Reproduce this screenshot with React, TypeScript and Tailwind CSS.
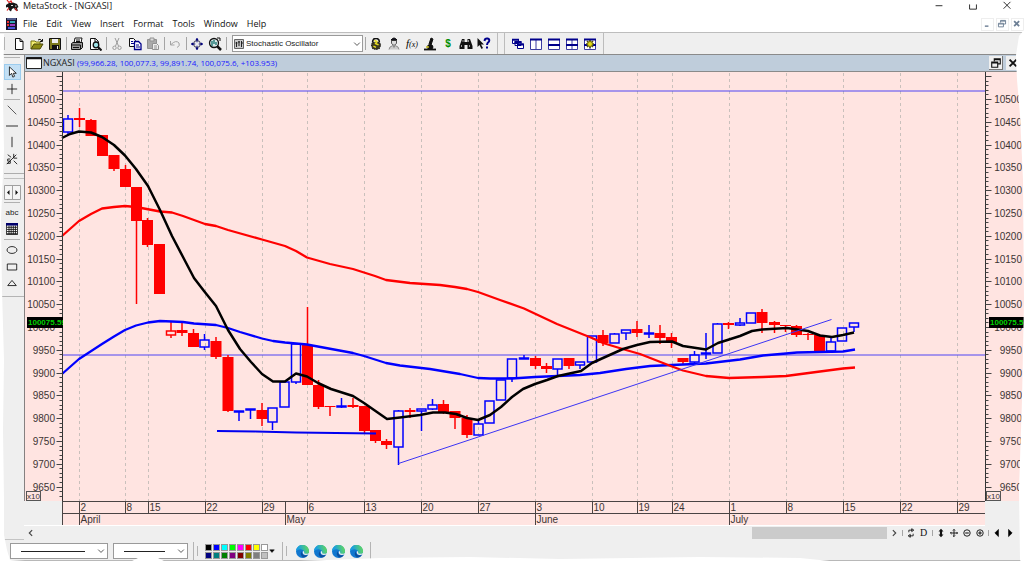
import React from "react";

type Kind = "up" | "down" | "open";
// x, body top, body bottom, wick top, wick bottom, kind
type Candle = [number, number, number, number, number, Kind];

const candles: Candle[] = [
  [68, 119, 132, 115, 135, "up"],
  [79.5, 118, 120, 108, 127, "down"],
  [91, 120, 136, 119, 136, "down"],
  [102.5, 135, 156, 135, 156, "down"],
  [114, 155, 169, 155, 171, "down"],
  [125.5, 169, 187, 165, 187, "down"],
  [136.5, 187, 221, 187, 304, "down"],
  [147.5, 220, 245, 218, 247, "down"],
  [159.5, 244, 294, 244, 294, "down"],
  [171, 331, 335, 322, 338, "open"],
  [182, 330, 333, 322, 336, "down"],
  [193.5, 333, 347, 329, 347, "down"],
  [204.5, 340, 347, 334, 350, "up"],
  [216, 341, 357, 337, 359, "down"],
  [228, 357, 411, 355, 412, "down"],
  [239, 411, 412, 411, 421, "up"],
  [250.5, 409, 410, 409, 419, "up"],
  [262, 410, 419, 403, 426, "down"],
  [272.5, 408, 422, 408, 430, "up"],
  [284.5, 382, 407, 382, 407, "up"],
  [296, 344, 382, 343, 384, "up"],
  [307.5, 345, 385, 307, 385, "down"],
  [318.5, 385, 407, 380, 409, "down"],
  [330, 406, 407, 406, 416, "down"],
  [341.5, 406, 407, 398, 408, "up"],
  [353, 405, 407, 398, 408, "down"],
  [364.5, 406, 431, 406, 433, "down"],
  [375.5, 430, 441, 430, 443, "down"],
  [386.5, 441, 445, 439, 449, "down"],
  [398.5, 411, 447, 410, 465, "up"],
  [410, 410, 412, 408, 418, "down"],
  [421.5, 409, 411, 409, 431, "up"],
  [432.5, 405, 409, 399, 410, "up"],
  [443.5, 404, 412, 400, 414, "down"],
  [455, 411, 418, 411, 429, "down"],
  [467, 418, 435, 415, 438, "down"],
  [478.5, 424, 435, 419, 435, "up"],
  [489.5, 401, 423, 401, 423, "up"],
  [501, 380, 400, 380, 400, "up"],
  [512, 359, 378, 359, 382, "up"],
  [524, 358, 359, 355, 359, "up"],
  [535.5, 358, 366, 356, 369, "down"],
  [546.5, 366, 369, 363, 373, "down"],
  [557.5, 359, 369, 359, 375, "up"],
  [569, 358, 366, 358, 369, "down"],
  [580, 362, 365, 362, 369, "up"],
  [592, 336, 362, 336, 362, "up"],
  [603, 335, 343, 330, 346, "down"],
  [614.5, 334, 343, 333, 343, "up"],
  [626, 330, 333, 330, 340, "up"],
  [637, 329, 333, 321, 337, "down"],
  [649, 333, 334, 325, 338, "up"],
  [660, 333, 338, 325, 344, "down"],
  [671.5, 337, 342, 333, 348, "down"],
  [683, 358, 362, 358, 364, "down"],
  [694.5, 355, 362, 351, 363, "up"],
  [706, 353, 354, 333, 359, "up"],
  [717.5, 324, 353, 323, 353, "up"],
  [728.5, 323, 325, 322, 329, "down"],
  [740, 323, 325, 318, 326, "up"],
  [751, 313, 323, 313, 323, "up"],
  [762, 312, 323, 309, 333, "down"],
  [774.5, 322, 325, 321, 333, "down"],
  [785.5, 325, 326, 325, 332, "down"],
  [796.5, 326, 335, 325, 337, "down"],
  [808, 334, 335, 333, 340, "down"],
  [819.5, 335, 351, 334, 352, "down"],
  [831, 342, 351, 337, 353, "up"],
  [842, 328, 341, 328, 341, "up"],
  [854, 323, 327, 323, 332, "up"],
];

const fastLine =
  "62,138 70,134 79,131.5 91,132.5 102,137 114,145 125,155.5 136,169 148,186 160,210 172,236 183,257 194,278 204,291 216,306 228,330 240,349 251,362 262,374 273,381.5 285,381.5 296,373.5 307,376.5 318,383 331,389 353,396 364,403 387,419 400,417.5 420,415 433,412.5 445,412.5 456,414 467,418 478,420 490,415 501,407 512,397 523,389 535,384 547,380 558,376 581,371 592,363 603,358 623,349 637,345 650,342 672,341.5 683,346 706,349.5 718,343 740,336 752,331 762,329.5 787,328 808,331 820,335.5 832,337 843,335 854,332.5";

const slowLine =
  "62,236 79,221 91,214 102,208.5 114,207 125,206 136,207 160,211.5 172,212.5 183,216 205,224 216,226 228,230 262,239.5 285,246 296,251 307,257.5 330,264 353,269 375,276 386,280 410,283 440,285 455,287 467,289 478,292 500,300 524,308.5 557,324 592,338 603,343 626,350 640,354 672,366.5 683,370.5 706,376 729,378 763,377 786,376 820,371.5 843,368.5 855,367.5";

const midLine =
  "62,374 79,359 102,344 114,336.5 125,330 136,325.5 148,322.5 160,321 172,321.5 183,322 194,323.5 216,325 228,328 240,332 262,338.5 273,341 285,342.5 307,344.5 353,353 364,356 386,363 400,365.5 430,369 460,374 478,378 490,378.5 512,378.5 535,377 580,375 600,373 626,369 650,366 672,365 706,363.5 740,359.5 763,355.5 786,353.5 797,352.5 843,351.5 855,349.5";

const weeks: [number, string][] = [
  [79.5, "2"],
  [125.5, "8"],
  [148.5, "15"],
  [205.5, "22"],
  [262.5, "29"],
  [307.5, "6"],
  [364.5, "13"],
  [421.5, "20"],
  [478.5, "27"],
  [535.5, "3"],
  [592.5, "10"],
  [637.5, "19"],
  [672.5, "24"],
  [729.5, "1"],
  [786.5, "8"],
  [843.5, "15"],
  [900.5, "22"],
  [957.5, "29"],
];

const months: [number, string][] = [
  [79.5, "April"],
  [285.5, "May"],
  [535.5, "June"],
  [729.5, "July"],
];

const levels = Array.from({ length: 18 }, (_, i) => 10500 - i * 50);
const minorTicks = Array.from({ length: 93 }, (_, i) => 76.2 + i * 4.56);

const PriceScale = ({ axisX, dir, labelX }: { axisX: number; dir: 1 | -1; labelX: number }) => (
  <g>
    <path d={`M${axisX} 72V501`} stroke="#333" />
    {minorTicks.map((y, i) => (
      <path key={y} d={`M${axisX} ${Math.round(y) + 0.5}h${dir * (i % 5 === 0 ? 6 : 3)}`} stroke="#444" />
    ))}
    {levels.map((v, i) => (
      <text key={v} x={labelX} y={Math.round(103 + i * 22.8)} textAnchor="end" fontSize="10" fill="#3c3434">
        {v}
      </text>
    ))}
  </g>
);

const PriceChart = () => (
  <svg viewBox="24 72 1000 454" className="block w-full" fontFamily="'Liberation Sans', Arial, sans-serif" role="img" aria-label="NGXASI daily chart">
    <rect x="24" y="72" width="1000" height="454" fill="#efefef" />
    <rect x="24" y="72" width="1000" height="429" fill="#ffe4e1" />
    <rect x="62" y="501" width="923" height="24" fill="#ffe4e1" />
    <path d="M24 525.5H985" stroke="#fff" />
    <path d="M24.5 72V501" stroke="#858080" />

    {weeks.map(([x]) => (
      <path key={x} d={`M${x} 73V501`} stroke="#c9c0bc" strokeDasharray="3 3" />
    ))}
    <path d="M62 91H985M62 355H985" stroke="#4e44f4" strokeWidth="1" />

    {candles.map(([x, top, bottom, high, low, kind]) => {
      const color = kind === "up" ? "#0000ff" : "#ff0000";
      return (
        <g key={x} stroke={color} strokeWidth="1.5">
          <path d={`M${x} ${high}V${top}M${x} ${bottom}V${low}`} />
          {kind === "down" ? (
            <rect x={x - 5.5} y={top} width="11" height={bottom - top} fill={color} stroke="none" />
          ) : (
            <rect x={x - 4.5} y={top} width="9" height={bottom - top} fill="none" />
          )}
        </g>
      );
    })}

    <g fill="none" strokeLinejoin="round">
      <polyline points={midLine} stroke="#0000ff" strokeWidth="2.3" />
      <polyline points={slowLine} stroke="#ff0000" strokeWidth="2.3" />
      <polyline points={fastLine} stroke="#000" strokeWidth="2.5" />
      <path d="M217 431L256 431.5L296 432.5L376 433.5" stroke="#0000f0" strokeWidth="1.8" />
      <path d="M398.5 463.5L831.5 319.5" stroke="#3c34f4" strokeWidth="1" />
    </g>

    <PriceScale axisX={62.5} dir={-1} labelX={55} />
    <PriceScale axisX={985.5} dir={1} labelX={1022} />

    {/* Last price tags */}
    <rect x="27" y="317" width="36" height="11" fill="#000" />
    <rect x="989" y="317" width="35" height="11" fill="#000" />
    <svg x="27" y="317" width="36" height="11">
      <text x="1" y="8" fontSize="8" fontWeight="bold" fill="#00d000">100075.59</text>
    </svg>
    <svg x="989" y="317" width="35" height="11">
      <text x="1" y="8" fontSize="8" fontWeight="bold" fill="#00d000">100075.5</text>
    </svg>

    {/* Scale factor */}
    <g fontSize="8" fill="#3c3434">
      <rect x="26.5" y="491.5" width="14" height="9" fill="#ffe4e1" stroke="#555" />
      <text x="27" y="499">x10</text>
      <rect x="986.5" y="491.5" width="14" height="9" fill="#ffe4e1" stroke="#555" />
      <text x="987" y="499">x10</text>
    </g>

    {/* Dates */}
    <path d="M62 501.5H985M62 513.5H985M62.5 501V525" stroke="#4a4444" />
    <g fontSize="10" fill="#3c3434">
      {weeks.map(([x, label]) => (
        <g key={x}>
          <path d={`M${x} 501V513`} stroke="#4a4444" />
          <text x={x + 1} y="511">{label}</text>
        </g>
      ))}
      {months.map(([x, label]) => (
        <g key={x}>
          <path d={`M${x} 501V525`} stroke="#4a4444" />
          <text x={x + 1} y="523">{label}</text>
        </g>
      ))}
    </g>
  </svg>
);

const Glyph = ({ children, className = "h-3.5 w-3.5" }: { children: React.ReactNode; className?: string }) => (
  <svg viewBox="0 0 14 14" className={`shrink-0 ${className}`} fill="none" stroke="#111" aria-hidden="true">
    {children}
  </svg>
);

const Tool = ({ label, children }: { label: string; children: React.ReactNode }) => (
  <button type="button" aria-label={label} className="flex h-5 w-[18px] shrink-0 items-center justify-center">
    {children}
  </button>
);

const Sep = () => (
  <span className="flex w-1 shrink-0 justify-center self-stretch py-1">
    <span className="w-px bg-[#a5a5a5]" />
  </span>
);

const Handle = () => (
  <span className="flex w-2 shrink-0 gap-[3px] self-stretch">
    <span className="w-px bg-[#b4b4b4]" />
    <span className="my-1 w-px bg-[#b4b4b4]" />
  </span>
);

const TitleBar = () => (
  <header className="flex h-3.5 items-start pl-1.5">
    <svg viewBox="0 0 13 12" className="h-3 w-[13px]" aria-hidden="true">
      <path d="M0 5L3 3L7 2.500L11 4L12.500 7L11 8L12 11L9 10L8 8L6 9L5 11.500L3 10L2 7L0 7.500Z" fill="#151515" />
      <path d="M1 0L3 2.500L5 1L6 3M3 8L1 10.500M9 8L11 11" fill="none" stroke="#d22" strokeWidth="1.200" />
      <path d="M5 5.500h2M9 6h1.500" stroke="#ddd" />
    </svg>
    <h1 className="flex-1 pl-1 text-[9px] leading-3 text-[#222]">MetaStock - [NGXASI]</h1>
    <div className="flex gap-5 pr-2.5 pt-px">
      <button type="button" aria-label="Minimize" className="h-3 w-3.5">
        <Glyph className="h-3 w-3.5"><path d="M3 5.500h8" /></Glyph>
      </button>
      <button type="button" aria-label="Maximize" className="h-3 w-3.5">
        <Glyph className="h-3 w-3.5"><path d="M3 4V9.500H11V4" /></Glyph>
      </button>
      <button type="button" aria-label="Close" className="h-3 w-3.5">
        <Glyph className="h-3 w-3.5"><path d="M3 1L11 9M11 1L3 9" /></Glyph>
      </button>
    </div>
  </header>
);

const menus = ["File", "Edit", "View", "Insert", "Format", "Tools", "Window", "Help"];

const MenuBar = () => (
  <nav className="flex h-[19px] items-center border-b border-[#bdbdbd] pl-1.5 pt-0.5">
    <svg viewBox="0 0 12 12" className="h-3 w-3" aria-hidden="true">
      <path d="M0 0h11v12H0z" fill="#17142e" />
      <path d="M1 3h2v2H1zM1 6h2v2H1z" fill="#e33" />
      <path d="M4 3h5v2H4z" fill="#35a7b8" />
      <path d="M4 6h5v2H4z" fill="#a13cc0" />
      <path d="M2 9h7v2H2z" fill="#4554d8" />
      <path d="M1 1h9" stroke="#8fa4e8" />
    </svg>
    <ul className="flex flex-1 gap-[9px] pl-[5px] text-[9px] leading-3 text-[#111]">
      {menus.map((m) => (
        <li key={m}>
          <button type="button">{m}</button>
        </li>
      ))}
    </ul>
    <div className="flex gap-0.5 text-[#6d7f95]">
      <button type="button" aria-label="Minimize chart" className="h-[13px] w-[13px] border border-[#eee]">
        <Glyph className="h-2.5 w-2.5"><path d="M4 10h5" stroke="#6d7f95" strokeWidth="2" /></Glyph>
      </button>
      <button type="button" aria-label="Restore chart" className="h-[13px] w-[13px] border border-[#eee]">
        <Glyph className="h-2.5 w-2.5"><path d="M5 5V2h7v5H9M2 6h7v5H2zM2 7h7M5 3h7" stroke="#6d7f95" strokeWidth="1.300" /></Glyph>
      </button>
      <button type="button" aria-label="Close chart" className="h-[13px] w-[13px] border border-[#eee]">
        <Glyph className="h-2.5 w-2.5"><path d="M3 3L10 10M10 3L3 10" stroke="#6d7f95" strokeWidth="2.500" /></Glyph>
      </button>
    </div>
  </nav>
);

const MainToolbar = () => (
  <div className="flex h-[22px] items-center border-b border-[#8a8a8a] bg-[#efefef] pl-1">
    <span className="my-1 mr-[5px] w-px self-stretch bg-[#b4b4b4]" />
    <Tool label="New">
      <Glyph><path d="M3.500 1.500h4.500l3 3v8h-7.500zM8 1.500v3h3" fill="#fff" /></Glyph>
    </Tool>
    <Tool label="Open">
      <Glyph>
        <path d="M1 12V4h4l1 1h4v2" fill="#f4ee73" stroke="#77740e" />
        <path d="M1 12l3-5h9l-3 5z" fill="#8c8a12" stroke="#4a480c" />
        <path d="M8 3q2-2 4 1M12.500 2v2.500H10" />
      </Glyph>
    </Tool>
    <Tool label="Save">
      <Glyph>
        <path d="M1.500 1.500h11v11h-11z" fill="#7c7a1c" />
        <path d="M4 2h6v4H4z" fill="#efefef" stroke="none" />
        <path d="M4 8h7v4H4z" fill="#111" stroke="none" />
        <path d="M9 9h1v3H9z" fill="#eee" stroke="none" />
      </Glyph>
    </Tool>
    <Sep />
    <Tool label="Print">
      <Glyph>
        <path d="M4 6l1-5h7l-1 5" fill="#fff" />
        <path d="M1.500 6.500l1.500-1h9.500v5l-2 2h-9z" fill="#999" />
        <path d="M1 8h9.500v4M3 10.500h6M6 3h4M6 4.500h4" />
      </Glyph>
    </Tool>
    <Tool label="Print preview">
      <Glyph>
        <path d="M2.500 1.500h5l3 3v8h-8zM7 1.500V5h3" fill="#fff" />
        <circle cx="8" cy="8" r="2.800" fill="#9fe3e8" strokeWidth="1.300" />
        <path d="M10 10l3.500 3.500" strokeWidth="2" />
      </Glyph>
    </Tool>
    <Sep />
    <Tool label="Cut">
      <Glyph><path d="M5 1l3.500 8M9 1L5.500 9" stroke="#9b9b9b" /><circle cx="4.500" cy="10.800" r="1.700" stroke="#9b9b9b" /><circle cx="9.500" cy="10.800" r="1.700" stroke="#9b9b9b" /></Glyph>
    </Tool>
    <Tool label="Copy">
      <Glyph>
        <path d="M1.500 1.500h4l2 2v6h-6z" fill="#fff" />
        <path d="M6.500 4.500h4l2.500 2.500v5.500H6.500z" fill="#fff" stroke="#00008b" strokeWidth="1.300" />
        <path d="M3 4.500h2M3 6.500h3M8 8h3M8 10h4" stroke="#00008b" />
      </Glyph>
    </Tool>
    <Tool label="Paste">
      <Glyph>
        <path d="M1.500 2.500h9v9h-9z" fill="#aaa" stroke="#929292" />
        <path d="M4 1h4v3H4z" fill="#ddd" stroke="#929292" />
        <path d="M6.500 6.500h4l2 2v4h-6zM8 9h3M8 11h3" fill="#eee" stroke="#929292" />
      </Glyph>
    </Tool>
    <Sep />
    <Tool label="Undo">
      <Glyph><path d="M2.500 4v4h4M3 7.500Q8 2.500 11 6Q12.500 9 9 10.500" stroke="#a3a3a3" /></Glyph>
    </Tool>
    <Sep />
    <Tool label="Crosshair">
      <Glyph className="h-3 w-3">
        <circle cx="7" cy="7" r="4" stroke="#26263c" />
        <path d="M7 0v5M7 9v5M0 7h5M9 7h5" stroke="#00007c" />
        <path d="M7 0L9 2.500H5zM7 14L5 11.500h4zM0 7l2.500-2v4zM14 7l-2.500 2V5z" fill="#00007c" stroke="none" />
      </Glyph>
    </Tool>
    <Tool label="Zoom">
      <Glyph>
        <circle cx="6" cy="6" r="4.500" fill="#d7e7e7" strokeWidth="1.300" />
        <path d="M9 9l4 4" strokeWidth="2.500" />
        <path d="M4 4v5M6 3v4M8 5v3" stroke="#13716c" strokeWidth="1.300" />
        <path d="M9 1h3v3" />
      </Glyph>
    </Tool>
    <Sep />
    <label className="ml-1 flex h-[17px] w-[131px] shrink-0 items-center border border-[#9a9a9a] bg-white px-px">
      <svg viewBox="0 0 10 10" className="h-2.5 w-2.5 shrink-0" aria-hidden="true">
        <path d="M.5.500h9v9h-9z" fill="#c8c8c8" stroke="#666" />
        <path d="M2.500 3v5M5 2v5M7.500 2v6M1.500 4h2M4 3h2M7 4h2" stroke="#222" />
      </svg>
      <span className="sr-only">Indicator</span>
      <select className="h-full min-w-0 flex-1 appearance-none pl-0.5 font-['Liberation_Sans',Arial,sans-serif] text-[8px] text-[#222]">
        <option>Stochastic Oscillator</option>
      </select>
      <Glyph className="h-2 w-2"><path d="M2 4.500l5 5 5-5" stroke="#555" strokeWidth="1.700" /></Glyph>
    </label>
    <Sep />
    <Tool label="System security">
      <Glyph className="h-3 w-3">
        <path d="M3 5q0-4.500 4-4.500T11 5" strokeWidth="1.800" />
        <path d="M3 5h8l1.500 3-1.500 4.500-4 1-4-1L1.500 8z" fill="#3c3a20" strokeDasharray="2 1" />
        <path d="M5 3l3 1-1.500 2.500L10 8M4 9.500l3 1.500" stroke="#e6dc20" strokeWidth="1.800" />
      </Glyph>
    </Tool>
    <Tool label="Expert advisor">
      <Glyph>
        <path d="M4.500 3.500h5v3L7 8.500 4.500 6.500z" fill="#ddd" stroke="#555" />
        <path d="M4 3q3-4 6 0z" fill="#15152d" />
        <path d="M2 12.500l1-2.500 3-1.500 1 2 1-2 3 1.500 1 2.500" stroke="#8c8c8c" fill="#ccc" />
      </Glyph>
    </Tool>
    <Tool label="Indicator builder">
      <span className="font-['Liberation_Serif',serif] text-[11px] italic leading-3">f<span className="text-[8px]">(x)</span></span>
    </Tool>
    <Tool label="Explorer">
      <Glyph>
        <path d="M8 1L6 7l2 1 2-6z" fill="#111" />
        <path d="M5 8h4q2 2 0 4H5z" fill="#111" />
        <path d="M1 12.500h12" strokeWidth="1.800" />
        <path d="M3 10h3" stroke="#c9bc1a" strokeWidth="1.500" />
      </Glyph>
    </Tool>
    <Tool label="System tester">
      <span className="font-['Liberation_Sans',Arial,sans-serif] text-[10px] font-bold leading-3 text-[#008d00]">$</span>
    </Tool>
    <Tool label="Find">
      <Glyph>
        <path d="M3 2h2.500v3h3V2H11l2.500 7v3h-5V8h-3v4H.5V9z" fill="#111" stroke="none" />
        <path d="M2.500 8v2M10.500 8v2M4 3v2M9.500 3v2" stroke="#bbb" strokeWidth=".8" />
      </Glyph>
    </Tool>
    <Tool label="Context help">
      <Glyph>
        <path d="M.5 1v9l2-2 2 4 1.500-1-2-3.500H7z" fill="#111" stroke="none" />
        <path d="M7.500 4Q8 1 10.500 1.500Q13 2 12 4.500Q10 6 10 8M10 9.500v2" stroke="#00008b" strokeWidth="2" />
      </Glyph>
    </Tool>
    <span className="ml-1 mr-0.5 w-px self-stretch bg-[#bcbcbc]" />
    <span className="mx-1 w-px self-stretch bg-[#bcbcbc]" />
    <Tool label="Cascade">
      <Glyph>
        <path d="M1.500 2.500h6v4h-6zM4 4.500h6v4H4zM6.500 7h6v4.500h-6z" fill="#fff" stroke="#00008b" />
        <path d="M1 2.800h7M3.500 5h7M6 7.500h7" stroke="#00008b" strokeWidth="2" />
      </Glyph>
    </Tool>
    <Tool label="Columns">
      <Glyph>
        <path d="M1.500 2v10.500h11V2M7 2v10.500" fill="#fff" stroke="#3c3ca0" />
        <path d="M1 2.500h12" stroke="#00008b" strokeWidth="2" />
      </Glyph>
    </Tool>
    <Tool label="Rows">
      <Glyph>
        <path d="M1.500 2v10.500h11V2" fill="#fff" stroke="#3c3ca0" />
        <path d="M1 2.500h12M1 8h12" stroke="#00008b" strokeWidth="2.200" />
      </Glyph>
    </Tool>
    <Tool label="Tile">
      <Glyph>
        <path d="M1.500 2v10.500h11V2M7 2v10.500" fill="#fff" stroke="#3c3ca0" />
        <path d="M1 2.500h12M1 8h12" stroke="#00008b" strokeWidth="2" />
      </Glyph>
    </Tool>
    <Tool label="Layout options">
      <Glyph>
        <path d="M1.500 2v10.500h11V2M7 2v10.500" fill="#fff" stroke="#3c3ca0" />
        <path d="M1 2.500h12M1 8h12" stroke="#00008b" strokeWidth="2" />
        <path d="M7 3v8M3 7h8M4 4l6 6M10 4l-6 6" stroke="#55520a" strokeWidth="1.500" />
        <circle cx="7" cy="7" r="2.500" fill="#e6de18" stroke="#77720e" />
      </Glyph>
    </Tool>
    <span className="ml-1 w-px self-stretch bg-[#bcbcbc]" />
  </div>
);

const DrawTool = ({ label, tall, active, children }: { label: string; tall?: boolean; active?: boolean; children: React.ReactNode }) => (
  <button
    type="button"
    aria-label={label}
    className={`flex w-[17px] shrink-0 items-center justify-center ${tall ? "h-[17px]" : "h-4"} ${active ? "border border-[#9cccee] bg-[#c3e0f5]" : ""}`}
  >
    {children}
  </button>
);

const Rule = () => (
  <span className="flex h-[5px] w-4 shrink-0 items-center">
    <span className="h-px w-full bg-[#b0b0b0]" />
  </span>
);

const DrawingBar = () => (
  <aside className="flex w-6 shrink-0 flex-col items-center bg-[#efefef]">
    <span className="flex h-[9px] w-4 flex-col pt-0.5">
      <span className="h-px bg-[#b4b4b4]" />
    </span>
    <DrawTool label="Pointer" active>
      <Glyph className="h-3 w-3"><path d="M4 1v10l2.500-2.500L8 13l2-1-1.500-3.500H12z" fill="#fff" /></Glyph>
    </DrawTool>
    <DrawTool label="Crosshair pointer" tall>
      <Glyph className="h-3 w-3"><path d="M7 1v12M1 7h12" /></Glyph>
    </DrawTool>
    <Rule />
    <DrawTool label="Trendline">
      <Glyph className="h-3 w-3"><path d="M2 2l10 10" stroke="#444" /></Glyph>
    </DrawTool>
    <DrawTool label="Horizontal line">
      <Glyph className="h-3 w-3"><path d="M0 7h14" /></Glyph>
    </DrawTool>
    <DrawTool label="Vertical line">
      <Glyph className="h-3 w-3"><path d="M7 1v12" /></Glyph>
    </DrawTool>
    <DrawTool label="Semi-log trendline" tall>
      <Glyph className="h-3 w-3"><path d="M1 13L12 2M9 1v5h4M5 7H2v2.500h3V12H1M2 2l4 3M9 9l4 4" /></Glyph>
    </DrawTool>
    <span className="flex h-[17px] w-full shrink-0 flex-col justify-center gap-1 pl-1">
      <span className="h-px bg-[#adadad]" />
      <span className="h-px bg-[#c0c0c0]" />
    </span>
    <DrawTool label="Scroll tools">
      <svg viewBox="0 0 17 15" className="h-[15px] w-[17px]" aria-hidden="true">
        <path d="M.5.500h16v14H.5zM8.500 0v15" fill="#f5f5f5" stroke="#a0a0a0" />
        <path d="M5.500 5v5L3 7.500zM11.500 5v5L14 7.500z" fill="#111" />
      </svg>
    </DrawTool>
    <Rule />
    <DrawTool label="Text">
      <span className="font-['Liberation_Sans',Arial,sans-serif] text-[8px] leading-3 text-[#222]">abc</span>
    </DrawTool>
    <DrawTool label="Data grid">
      <Glyph className="h-3 w-3">
        <path d="M.5.500h13v13H.5z" fill="#fff" />
        <path d="M1 5h12M1 7.500h12M1 10h12M1 12.500h12M3.500 3v10M6 3v10M8.500 3v10M11 3v10" />
        <path d="M0 1.500h14" stroke="#00006b" strokeWidth="3" />
      </Glyph>
    </DrawTool>
    <Rule />
    <DrawTool label="Ellipse">
      <Glyph className="h-3 w-3"><ellipse cx="7" cy="7" rx="5.800" ry="4" /></Glyph>
    </DrawTool>
    <DrawTool label="Rectangle" tall>
      <Glyph className="h-3 w-3"><path d="M1.500 3.500h11v7h-11z" /></Glyph>
    </DrawTool>
    <DrawTool label="Triangle">
      <Glyph className="h-3 w-3"><path d="M7 4l5 6H2z" /></Glyph>
    </DrawTool>
    <span className="flex h-2.5 w-full items-center">
      <span className="h-px w-full bg-[#b4b4b4]" />
    </span>
    <span className="mt-auto h-px w-full bg-[#c4c4c4]" />
  </aside>
);

const ChartHeader = () => (
  <div className="flex h-[17px] items-center border-b border-l border-[#8a8a8a] bg-[#bfcddb] pl-px">
    <svg viewBox="0 0 16 12" className="h-3 w-4" aria-hidden="true">
      <path d="M.5.500h15v11H.5z" fill="#fff" stroke="#222" />
      <path d="M0 1.500h16" stroke="#111" strokeWidth="1.500" />
    </svg>
    <h2 className="flex-1 pl-px text-[9px] leading-3.5 text-[#222]">
      NGXASI <span className="text-[8px] text-[#2020ff]">(99,966.28, 100,077.3, 99,891.74, 100,075.6, +103.953)</span>
    </h2>
    <div className="flex gap-[3px] pr-1">
      <button type="button" aria-label="Restore" className="flex h-3.5 w-3.5 items-center justify-center border-b border-r border-[#777] bg-[#efefef]">
        <Glyph className="h-3 w-3"><path d="M5 5V2h7v6H9M2 6h7v6H2zM2 7h7M5 3h7" strokeWidth="1.300" /></Glyph>
      </button>
      <button type="button" aria-label="Close" className="flex h-3.5 w-3.5 items-center justify-center bg-[#efefef]">
        <Glyph className="h-3 w-3"><path d="M3 3l8 8M11 3l-8 8" strokeWidth="2.200" /></Glyph>
      </button>
    </div>
  </div>
);

const Nav = ({ label, children }: { label: string; children: React.ReactNode }) => (
  <button type="button" aria-label={label} className="flex h-3 w-[13px] shrink-0 items-center justify-center">
    {children}
  </button>
);

const ScrollRow = () => (
  <div className="flex h-3.5 items-center bg-[#efefef] pr-2">
    <Nav label="Scroll left">
      <Glyph className="h-2 w-2"><path d="M9 2L4 7l5 5" strokeWidth="2" stroke="#444" /></Glyph>
    </Nav>
    <div className="flex h-3 flex-1 justify-end">
      <div className="w-[135px] bg-[#cbcbcb]" />
    </div>
    <Nav label="Scroll right">
      <Glyph className="h-2 w-2"><path d="M5 2l5 5-5 5" strokeWidth="2" stroke="#444" /></Glyph>
    </Nav>
    <Sep />
    <Nav label="Refresh">
      <Glyph className="h-2.5 w-2.5"><path d="M4 6V3h5M8 1v4l3-2zM10 8v3H5M6 9v4l-3-2z" strokeWidth="1.200" /></Glyph>
    </Nav>
    <Nav label="Daily">
      <span className="font-['Liberation_Serif',serif] text-[10px] leading-3 text-[#111]">D</span>
    </Nav>
    <Sep />
    <Nav label="Rescale vertically">
      <Glyph className="h-2.5 w-2.5"><path d="M7 1l3.500 4H8.500v4h2L7 13 3.500 9h2V5h-2z" fill="#111" stroke="none" /></Glyph>
    </Nav>
    <Nav label="Move">
      <Glyph className="h-2.5 w-2.5"><path d="M7 2v10M2 7h10M5.500 3.500L7 2l1.500 1.500M5.500 10.500L7 12l1.500-1.500M3.500 5.500L2 7l1.500 1.500M10.500 5.500L12 7l-1.500 1.500" strokeWidth="1.300" /></Glyph>
    </Nav>
    <Nav label="Zoom out">
      <Glyph className="h-2.5 w-2.5"><circle cx="7" cy="7" r="4.500" strokeWidth="1.300" /><path d="M4.500 7h5" strokeWidth="1.500" /></Glyph>
    </Nav>
    <Nav label="Zoom in">
      <Glyph className="h-2.5 w-2.5"><circle cx="7" cy="7" r="4.500" strokeWidth="1.300" /><path d="M4.500 7h5M7 4.500v5" strokeWidth="1.500" /></Glyph>
    </Nav>
    <Sep />
    <Nav label="Previous">
      <Glyph className="h-2.5 w-2.5"><path d="M9 2v10L4 7z" fill="#000" /></Glyph>
    </Nav>
    <Nav label="Next">
      <Glyph className="h-2.5 w-2.5"><path d="M5 2v10l5-5z" fill="#000" /></Glyph>
    </Nav>
  </div>
);

const swatches = [
  "bg-black", "bg-[#0000ff]", "bg-[#00ffff]", "bg-[#00ff00]", "bg-[#ff00ff]", "bg-[#ff0000]", "bg-[#ffff00]", "bg-white",
  "bg-[#000080]", "bg-[#008080]", "bg-[#008000]", "bg-[#800080]", "bg-[#800000]", "bg-[#808000]", "bg-[#808080]", "bg-[#c0c0c0]",
];

const LineSelect = ({ label, width }: { label: string; width: string }) => (
  <label className={`flex h-4 shrink-0 items-center border border-[#9a9a9a] bg-white pl-2.5 pr-0.5 ${width}`}>
    <span className="sr-only">{label}</span>
    <select className="h-full min-w-0 flex-1 appearance-none bg-[linear-gradient(#222,#222)] bg-[length:100%_1px] bg-center bg-no-repeat text-[8px]" />
    <Glyph className="ml-3 h-2 w-2"><path d="M2 4.500l5 5 5-5" stroke="#555" strokeWidth="1.700" /></Glyph>
  </label>
);

const EdgeLogo = () => (
  <svg viewBox="0 0 14 14" className="h-[13px] w-[13px]" aria-hidden="true">
    <defs>
      <linearGradient id="wave" x1="0" y1="0.500" x2="1" y2="0.300">
        <stop offset="0.200" stopColor="#1a9fdf" />
        <stop offset="1" stopColor="#63db57" />
      </linearGradient>
    </defs>
    <circle cx="7" cy="7" r="7" fill="#1277cf" />
    <path d="M0 6.500A7 7 0 0 1 14 7Q14 10 10.500 10Q8 10 8.500 8.500Q9.500 7 7.500 5.500Q4 3.500 0 6.500Z" fill="url(#wave)" />
    <path d="M6 7Q3.500 11 8 13.500Q11.500 13.500 13 10.500Q10 12 8 10.500Q5.500 9 6.500 7Z" fill="#0c4f9e" />
    <path d="M7.500 6.500Q6.800 8.500 8 10Q10 11.500 14 10V8.500Q13 9.800 10.500 9.500Q8.300 9.300 8.800 8Q9 7 7.500 6.500Z" fill="#efefef" />
  </svg>
);

const StyleBar = () => (
  <div className="flex h-[21px] items-center border-b border-[#b8b8b8] bg-[#efefef] pl-2.5 pt-0.5">
    <LineSelect label="Line style" width="w-[98px]" />
    <span className="w-[5px] shrink-0" />
    <LineSelect label="Line weight" width="w-[75px]" />
    <span className="w-[5px] shrink-0" />
    <Handle />
    <div className="grid grid-cols-8 gap-px pl-1">
      {swatches.map((c) => (
        <button key={c} type="button" aria-label={c} className={`h-[7px] w-[7px] border border-[#999] ${c}`} />
      ))}
    </div>
    <button type="button" aria-label="More colours" className="w-2.5">
      <Glyph className="h-2 w-2"><path d="M3 5h8L7 9.500z" fill="#000" /></Glyph>
    </button>
    <span className="w-1 shrink-0" />
    <Handle />
    <div className="flex gap-[5px] pl-1.5 pr-[3px]">
      {[1, 2, 3, 4].map((n) => (
        <button key={n} type="button" aria-label={`Web page ${n}`}>
          <EdgeLogo />
        </button>
      ))}
    </div>
    <span className="ml-1 w-px self-stretch bg-[#b4b4b4]" />
  </div>
);

// Torn white border over the outside of the window
const TornEdge = () => (
  <svg viewBox="0 0 1024 566" preserveAspectRatio="none" className="pointer-events-none absolute inset-0 h-full w-full" fill="#fff" aria-hidden="true">
    <path d="M0 34H4L3 100L4 150L1 220L2 290L4 360L3 430L4 500L4 535L7 550L10 560L40 562L90 562L132 561L138 558L158 558L164 561L200 564L300 561L380 558L470 557L560 559L700 557L800 558L840 562L900 565L970 563L1020 561L1024 566H0Z" />
    <path d="M1024 30L1019 36L1016 55L1017 80L1020 115L1023 180L1024 300L1022 400L1019 490L1020 560L1024 566Z" />
  </svg>
);

export default function App() {
  return (
    <div className="relative bg-white pb-[5px] font-['Open_Sans','Noto_Sans',sans-serif]">
      <TitleBar />
      <MenuBar />
      <MainToolbar />
      <div className="flex">
        <DrawingBar />
        <main className="min-w-0 flex-1">
          <ChartHeader />
          <PriceChart />
          <ScrollRow />
        </main>
      </div>
      <StyleBar />
      <TornEdge />
    </div>
  );
}
